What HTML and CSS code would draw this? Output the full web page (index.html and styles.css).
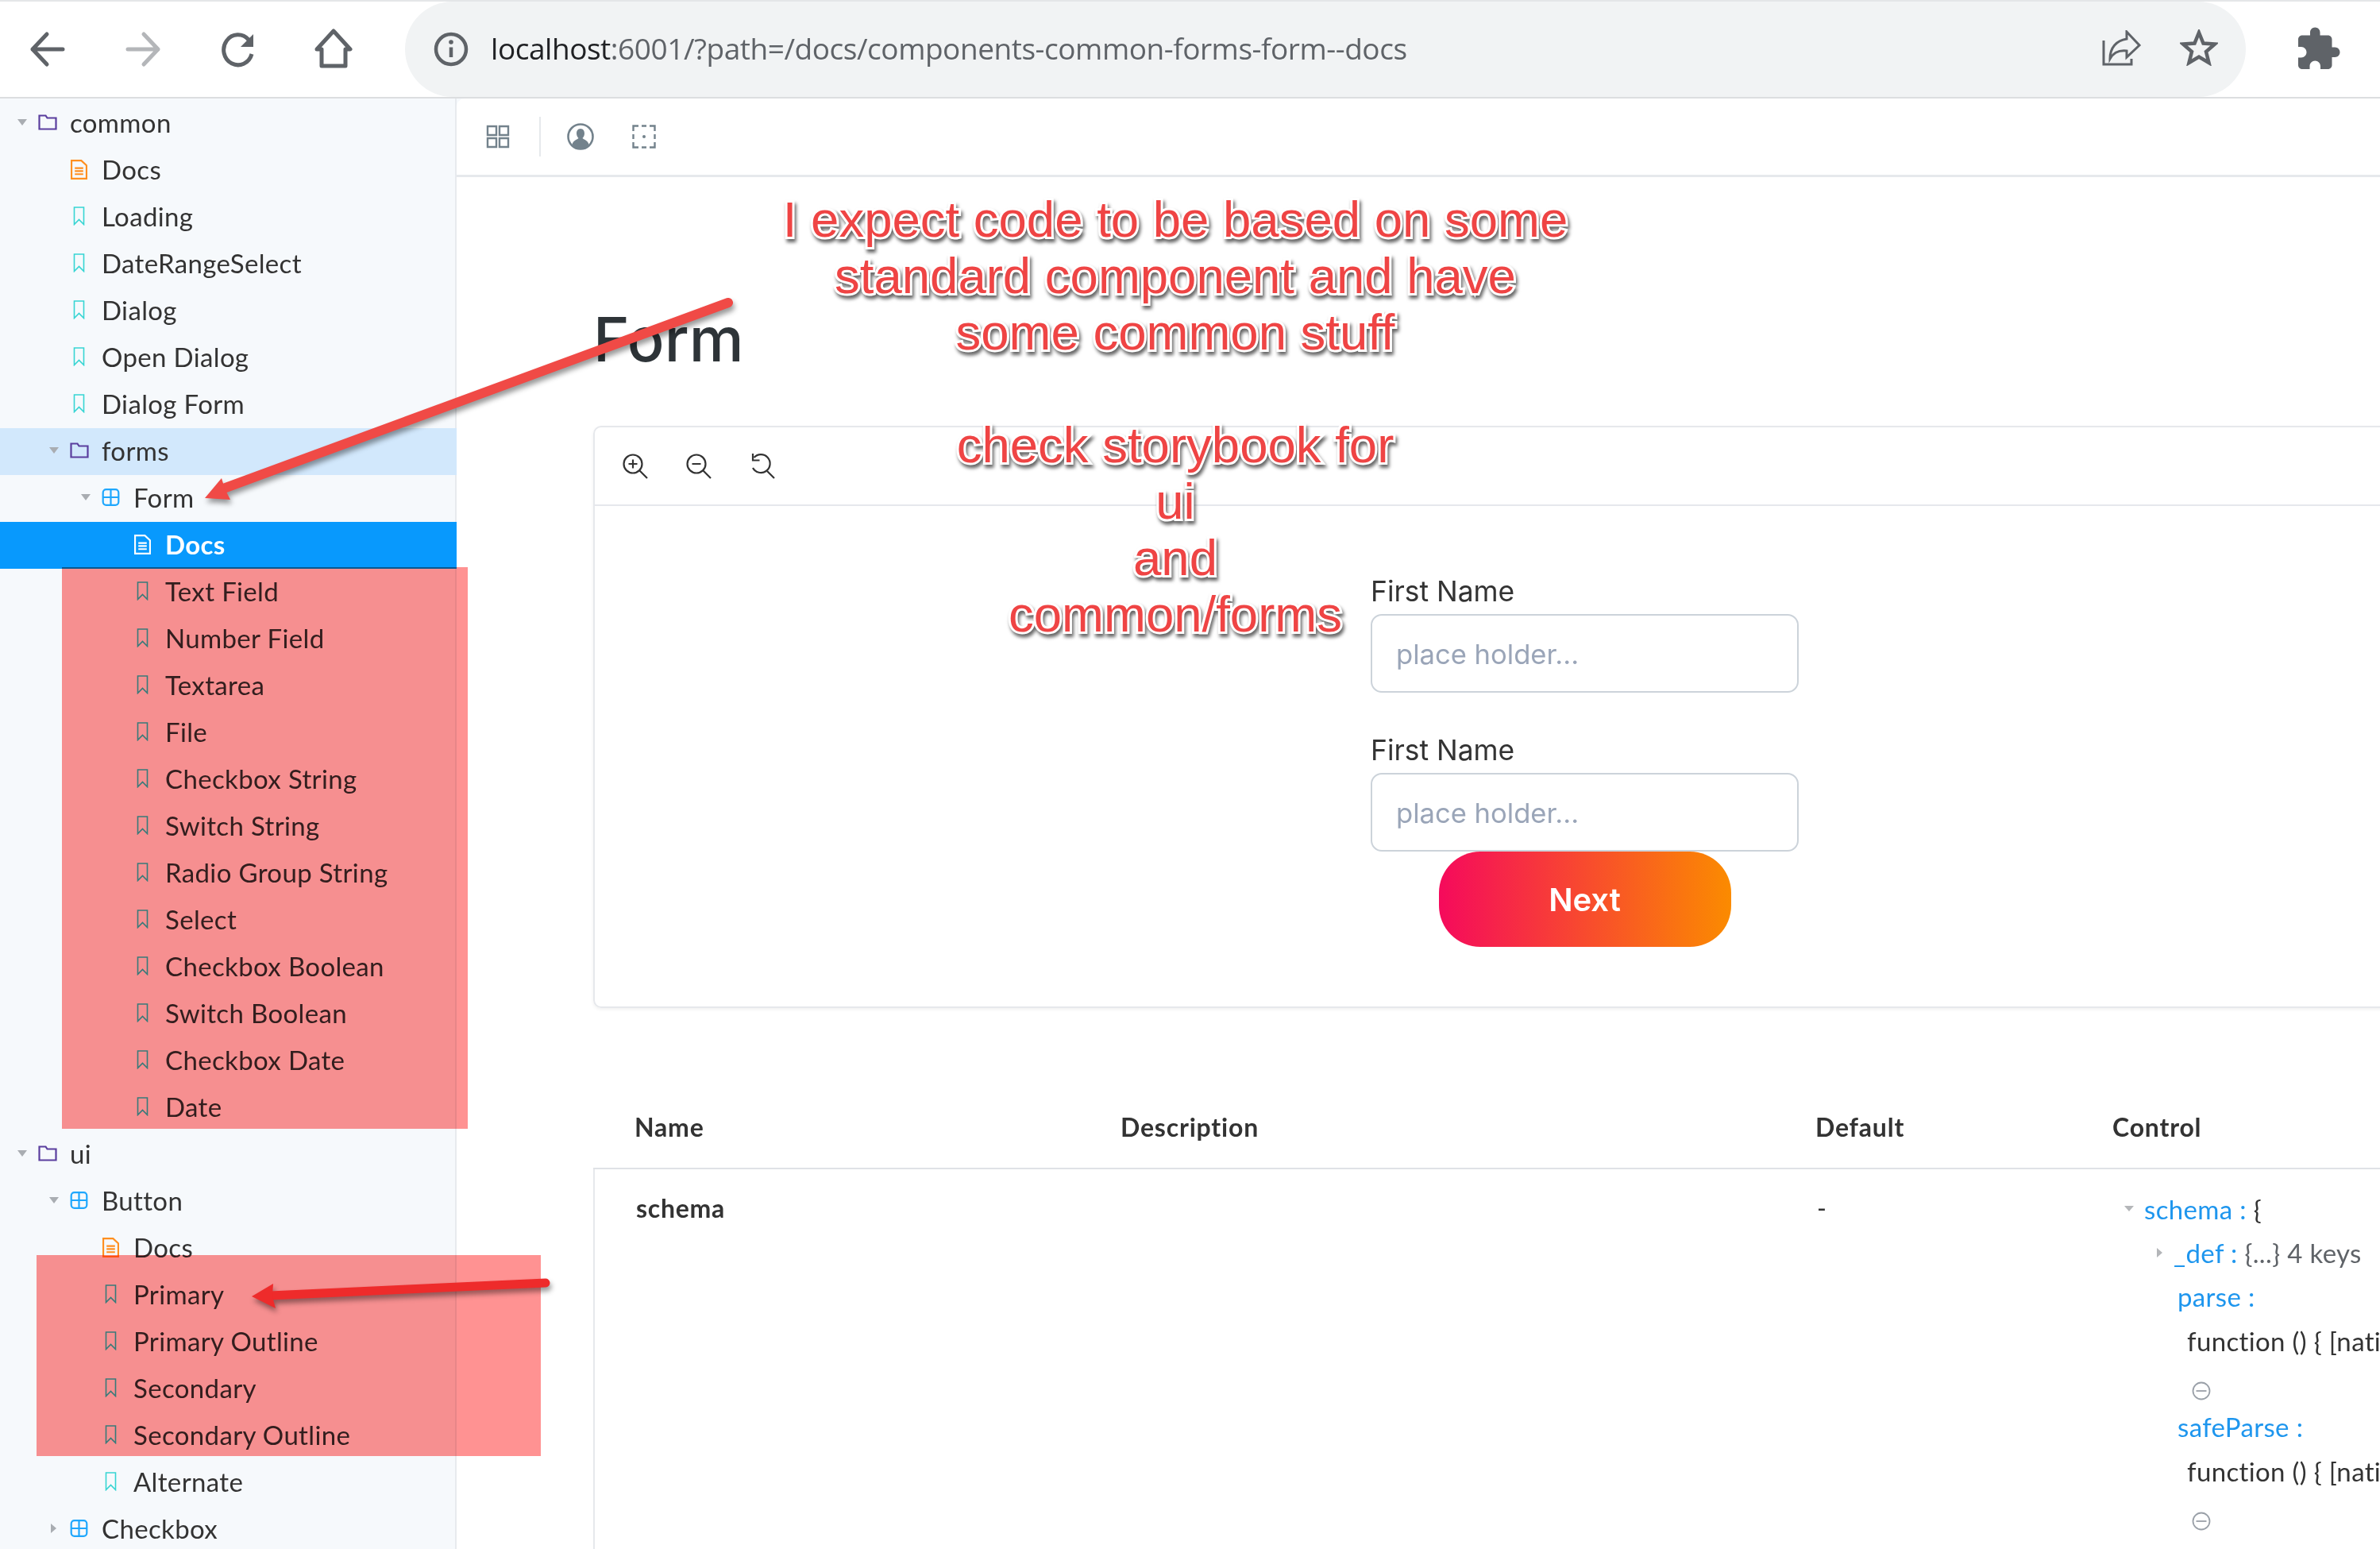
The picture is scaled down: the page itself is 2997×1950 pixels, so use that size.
FILE: index.html
```html
<!DOCTYPE html>
<html lang="en">
<head>
  <meta charset="UTF-8" />
  <meta name="viewport" content="width=device-width, initial-scale=1.0" />
  <title>Form - Docs</title>
  <link rel="stylesheet" href="styles.css">
</head>
<body>
  <svg class="defs" width="0" height="0">
    <symbol id="folder" viewBox="0 0 24 20"><path d="M1.500 18.500V1.500H9.500L11.500 4.500H22.500V18.500Z" fill="none" stroke="currentColor" stroke-width="2.200"/></symbol>
    <symbol id="comp" viewBox="0 0 22 22"><rect x="1.200" y="1.200" width="19.600" height="19.600" rx="4" fill="none" stroke="currentColor" stroke-width="2.200"/><path d="M11 1V21M1 11H21" stroke="currentColor" stroke-width="2.200"/></symbol>
    <symbol id="doc" viewBox="0 0 22 26"><path d="M1.200 1.200H14L20.800 7.500V24.800H1.200Z" fill="none" stroke="currentColor" stroke-width="2.200"/><path d="M5.500 11H16.500M5.500 15H16.500M5.500 19H16.500" stroke="currentColor" stroke-width="2.200"/></symbol>
    <symbol id="mark" viewBox="0 0 14 24"><path d="M1 1H13V22.500L7 16.500L1 22.500Z" fill="none" stroke="currentColor" stroke-width="1.600"/></symbol>
    <symbol id="collapse" viewBox="0 0 24 24"><circle cx="12" cy="12" r="10.500" fill="none" stroke="currentColor" stroke-width="1.800"/><path d="M5.500 12H18.500" stroke="currentColor" stroke-width="1.800"/></symbol>
  </svg>

  <header class="browser-bar">
    <button class="nav-btn"><svg width="48" height="48" viewBox="0 0 48 48"><path d="M43 24H5M23 5L5 24L23 43" fill="none" stroke="#5f6368" stroke-width="5" stroke-linecap="round" stroke-linejoin="round"/></svg></button>
    <button class="nav-btn"><svg width="48" height="48" viewBox="0 0 48 48"><path d="M5 24H43M25 5L43 24L25 43" fill="none" stroke="#b4b6b9" stroke-width="5" stroke-linecap="round" stroke-linejoin="round"/></svg></button>
    <button class="nav-btn"><svg width="48" height="48" viewBox="0 0 48 48"><path d="M37 12A18 19 0 1 0 41 30" fill="none" stroke="#5f6368" stroke-width="5"/><path d="M43 5V21H27Z" fill="#5f6368"/></svg></button>
    <button class="nav-btn"><svg width="52" height="52" viewBox="0 0 52 52"><path d="M26 3L47 26H41V47H11V26H5Z" fill="none" stroke="#5f6368" stroke-width="5" stroke-linejoin="round"/></svg></button>
    <div class="address">
      <svg width="44" height="44" viewBox="0 0 44 44"><circle cx="22" cy="22" r="19" fill="none" stroke="#5f6368" stroke-width="4.500"/><path d="M22 19.500V32" stroke="#5f6368" stroke-width="4.500"/><circle cx="22" cy="13" r="2.800" fill="#5f6368"/></svg>
      <span class="url"><b>localhost</b>:6001/?path=/docs/components-common-forms-form--docs</span>
      <svg class="share" width="50" height="46" viewBox="0 0 50 46"><path d="M2 13V43H37V36" fill="none" stroke="#5f6368" stroke-width="3"/><path d="M31 2L47 19L31 34V26C22 25 15 27 10 36C10 22 18 13 31 11Z" fill="none" stroke="#5f6368" stroke-width="3"/></svg>
      <svg class="star" width="48" height="46" viewBox="0 0 48 46"><path d="M24 4L29.500 17.500L44 18.500L33 28L36.500 42L24 34.500L11.500 42L15 28L4 18.500L18.500 17.500Z" fill="none" stroke="#5f6368" stroke-width="4.500"/></svg>
    </div>
    <svg class="puzzle" width="60" height="60" viewBox="0 0 24 24"><path fill="#5f6368" d="M20.500 11H19V7c0-1.100-.9-2-2-2h-4V3.500C13 2.120 11.880 1 10.500 1S8 2.120 8 3.500V5H4c-1.100 0-1.990.9-1.990 2v3.800H3.500c1.490 0 2.700 1.210 2.700 2.700s-1.210 2.700-2.700 2.700H2V20c0 1.100.9 2 2 2h3.800v-1.500c0-1.490 1.210-2.700 2.700-2.700 1.490 0 2.700 1.210 2.700 2.700V22H17c1.100 0 2-.9 2-2v-4h1.500c1.380 0 2.500-1.120 2.500-2.500S21.880 11 20.500 11z"/></svg>
  </header>

  <div class="layout">
    <nav class="sidebar">
      <div class="row d0"><i class="caret"></i><svg class="ico folder"><use href="#folder"/></svg>common</div>
      <div class="row d1"><svg class="ico doc"><use href="#doc"/></svg>Docs</div>
      <div class="row d1"><svg class="ico mark"><use href="#mark"/></svg>Loading</div>
      <div class="row d1"><svg class="ico mark"><use href="#mark"/></svg>DateRangeSelect</div>
      <div class="row d1"><svg class="ico mark"><use href="#mark"/></svg>Dialog</div>
      <div class="row d1"><svg class="ico mark"><use href="#mark"/></svg>Open Dialog</div>
      <div class="row d1"><svg class="ico mark"><use href="#mark"/></svg>Dialog Form</div>
      <div class="row d1 branch open"><i class="caret"></i><svg class="ico folder"><use href="#folder"/></svg>forms</div>
      <div class="row d2 branch"><i class="caret"></i><svg class="ico comp"><use href="#comp"/></svg>Form</div>
      <div class="row d3 selected"><svg class="ico doc"><use href="#doc"/></svg>Docs</div>
      <div class="row d3"><svg class="ico mark"><use href="#mark"/></svg>Text Field</div>
      <div class="row d3"><svg class="ico mark"><use href="#mark"/></svg>Number Field</div>
      <div class="row d3"><svg class="ico mark"><use href="#mark"/></svg>Textarea</div>
      <div class="row d3"><svg class="ico mark"><use href="#mark"/></svg>File</div>
      <div class="row d3"><svg class="ico mark"><use href="#mark"/></svg>Checkbox String</div>
      <div class="row d3"><svg class="ico mark"><use href="#mark"/></svg>Switch String</div>
      <div class="row d3"><svg class="ico mark"><use href="#mark"/></svg>Radio Group String</div>
      <div class="row d3"><svg class="ico mark"><use href="#mark"/></svg>Select</div>
      <div class="row d3"><svg class="ico mark"><use href="#mark"/></svg>Checkbox Boolean</div>
      <div class="row d3"><svg class="ico mark"><use href="#mark"/></svg>Switch Boolean</div>
      <div class="row d3"><svg class="ico mark"><use href="#mark"/></svg>Checkbox Date</div>
      <div class="row d3"><svg class="ico mark"><use href="#mark"/></svg>Date</div>
      <div class="row d0"><i class="caret"></i><svg class="ico folder"><use href="#folder"/></svg>ui</div>
      <div class="row d1 branch"><i class="caret"></i><svg class="ico comp"><use href="#comp"/></svg>Button</div>
      <div class="row d2"><svg class="ico doc"><use href="#doc"/></svg>Docs</div>
      <div class="row d2"><svg class="ico mark"><use href="#mark"/></svg>Primary</div>
      <div class="row d2"><svg class="ico mark"><use href="#mark"/></svg>Primary Outline</div>
      <div class="row d2"><svg class="ico mark"><use href="#mark"/></svg>Secondary</div>
      <div class="row d2"><svg class="ico mark"><use href="#mark"/></svg>Secondary Outline</div>
      <div class="row d2"><svg class="ico mark"><use href="#mark"/></svg>Alternate</div>
      <div class="row d1 branch closed"><i class="caret"></i><svg class="ico comp"><use href="#comp"/></svg>Checkbox</div>
    </nav>

    <main class="main">
      <div class="sb-toolbar">
        <svg width="30" height="30" viewBox="0 0 30 30"><path d="M2 2H13V13H2ZM17 2H28V13H17ZM2 17H13V28H2ZM17 17H28V28H17Z" fill="none" stroke="#73828c" stroke-width="2.400"/></svg>
        <span class="tb-divider"></span>
        <svg width="34" height="34" viewBox="0 0 34 34"><circle cx="17" cy="17" r="15.500" fill="none" stroke="#73828c" stroke-width="2.600"/><path d="M17 7C13.500 7 12 10 12 13C12 16 13.500 18 14.500 19C12 21 7.500 22 6.500 27C9 30.500 13 32 17 32C21 32 25 30.500 27.500 27C26.500 22 22 21 19.500 19C20.500 18 22 16 22 13C22 10 20.500 7 17 7Z" fill="#73828c"/></svg>
        <svg class="tb-outline" width="30" height="30" viewBox="0 0 30 30"><path d="M1.500 8V1.500H8M12 1.500H18M22 1.500H28.500V8M28.500 12V18M28.500 22V28.500H22M18 28.500H12M8 28.500H1.500V22M1.500 18V12" fill="none" stroke="#73828c" stroke-width="2.400"/><circle cx="15" cy="15" r="2" fill="#73828c"/></svg>
      </div>

      <div class="content">
        <h1>Form</h1>

        <section class="canvas">
          <div class="canvas-bar">
            <svg width="34" height="34" viewBox="0 0 34 34"><circle cx="14" cy="14" r="11.500" fill="none" stroke="#333" stroke-width="2.200"/><path d="M22.500 22.500L32 32M14 8.500V19.500M8.500 14H19.500" stroke="#333" stroke-width="2.200"/></svg>
            <svg width="34" height="34" viewBox="0 0 34 34"><circle cx="14" cy="14" r="11.500" fill="none" stroke="#333" stroke-width="2.200"/><path d="M22.500 22.500L32 32M8.500 14H19.500" stroke="#333" stroke-width="2.200"/></svg>
            <svg width="34" height="34" viewBox="0 0 34 34"><path d="M6.500 6A11.500 11.500 0 1 1 5 19" fill="none" stroke="#333" stroke-width="2.200"/><path d="M5 1V9.500H13.500" fill="none" stroke="#333" stroke-width="2.200"/><path d="M23 23L32 32" stroke="#333" stroke-width="2.200"/></svg>
          </div>
          <form class="demo-form">
            <label class="field-label">First Name</label>
            <input class="field-input" type="text" placeholder="place holder..." />
            <label class="field-label second">First Name</label>
            <input class="field-input" type="text" placeholder="place holder..." />
            <button class="next-btn" type="button">Next</button>
          </form>
        </section>

        <section class="args">
          <div class="args-head">
            <span>Name</span>
            <span>Description</span>
            <span>Default</span>
            <span>Control</span>
          </div>
          <div class="args-row">
            <span class="arg-name">schema</span>
            <span></span>
            <span class="arg-default">-</span>
            <div class="tree">
              <div class="tree-line"><i class="tree-caret"></i><span class="key">schema :</span>&nbsp;{</div>
              <div class="tree-line nested"><i class="tree-caret side"></i><span class="key">_def :</span>&nbsp;<span class="muted">{...} 4 keys</span></div>
              <div class="tree-line nested"><span class="key">parse :</span></div>
              <div class="tree-fn">function () { [native code] }</div>
              <div class="tree-collapse"><svg width="24" height="24"><use href="#collapse"/></svg></div>
              <div class="tree-line nested"><span class="key">safeParse :</span></div>
              <div class="tree-fn">function () { [native code] }</div>
              <div class="tree-collapse"><svg width="24" height="24"><use href="#collapse"/></svg></div>
            </div>
          </div>
        </section>
      </div>
    </main>
  </div>

  <!-- markup drawn over the screenshot -->
  <div class="highlight forms-mark"></div>
  <div class="highlight button-mark"></div>
  <p class="note">I expect code to be based on some<br>standard component and have<br>some common stuff<br><br>check storybook for<br>ui<br>and<br>common/forms</p>
  <svg class="arrows" width="2997" height="1950" viewBox="0 0 2997 1950">
    <g class="arrow-one">
      <path d="M917 381L276 617" fill="none" stroke="#f04a46" stroke-width="12" stroke-linecap="round"/>
      <path d="M258 627L279 602L283 615L290 629Z" fill="#f04a46"/>
    </g>
    <g class="arrow-two">
      <path d="M687 1615L340 1631" fill="none" stroke="#ee2b2b" stroke-width="11" stroke-linecap="round"/>
      <path d="M317 1632L344 1616L343 1632L347 1647Z" fill="#ee2b2b"/>
    </g>
  </svg>
</body>
</html>
```

FILE: styles.css
```css
* {
  box-sizing: border-box;
}
html, body {
  margin: 0;
  height: 100%;
  overflow: hidden;
}
body {
  position: relative;
  width: 2997px;
  height: 1950px;
  background: #fff;
  font-family: 'Lato', 'Open Sans', sans-serif;
  color: #333;
}
.defs {
  position: absolute;
}

/* browser chrome */
.browser-bar {
  display: flex;
  align-items: center;
  height: 124px;
  border-top: 2px solid #e4e6e8;
  border-bottom: 2px solid #dcdee0;
  background: #fff;
}
.nav-btn {
  display: flex;
  align-items: center;
  justify-content: center;
  width: 120px;
  padding: 0;
  border: none;
  background: none;
}
.address {
  display: flex;
  align-items: center;
  width: 2318px;
  height: 120px;
  margin-left: 30px;
  padding: 0 35px 0 36px;
  border-radius: 60px;
  background: #f1f3f4;
}
.url {
  flex: 1;
  margin-left: 28px;
  padding-bottom: 4px;
  font-family: 'Open Sans', sans-serif;
  font-size: 37px;
  letter-spacing: -0.46px;
  color: #5f6368;
  white-space: nowrap;
}
.url b {
  font-weight: 400;
  color: #202124;
}
.share {
  margin-top: -2px;
  margin-right: -2px;
}
.star {
  margin-left: 50px;
  margin-top: -4px;
}
.puzzle {
  margin-left: 61px;
}

.layout {
  display: flex;
  height: 1826px;
  background: #f6f9fc;
}

/* storybook sidebar */
.sidebar {
  flex: none;
  width: 575px;
  padding-top: 2px;
  border-right: 2px solid #e7eaee;
  font-size: 33px;
  letter-spacing: 0.35px;
  color: #333;
}
.row {
  display: flex;
  align-items: center;
  height: 59px;
  padding-bottom: 3px;
  white-space: nowrap;
}
.d0 { padding-left: 22px; }
.d1 { padding-left: 62px; }
.d2 { padding-left: 102px; }
.d3 { padding-left: 142px; }
.row > .ico:first-child {
  margin-left: 26px;
}
.caret {
  flex: none;
  width: 0;
  height: 0;
  margin-right: 14px;
  border-left: 6px solid transparent;
  border-right: 6px solid transparent;
  border-top: 8px solid #a9adb2;
}
.closed .caret {
  margin-left: 2px;
  margin-right: 17px;
  border: 6px solid transparent;
  border-right: none;
  border-left: 7px solid #a9adb2;
}
.ico {
  flex: none;
  margin-right: 17px;
}
.folder {
  width: 24px;
  height: 20px;
  margin-right: 16px;
  color: #5a3e9e;
}
.comp {
  width: 23px;
  height: 22px;
  color: #1ea7fd;
}
.doc {
  width: 23px;
  height: 25px;
  color: #ff8f1f;
}
.mark {
  width: 15px;
  height: 24px;
  margin-right: 21px;
  color: #37d5d3;
}
.row > .mark:first-child {
  margin-left: 30px;
}
.open {
  margin-right: -2px;
  background: #d2e8fc;
}
.selected {
  margin-right: -2px;
  background: #0899fd;
  color: #fff;
  font-weight: 700;
}
.selected .doc {
  color: #fff;
}

/* docs page */
.main {
  flex: 1;
  min-width: 0;
  overflow: hidden;
  background: #fff;
  border-top-left-radius: 10px;
}
.sb-toolbar {
  display: flex;
  align-items: center;
  height: 99px;
  padding-left: 37px;
  border-bottom: 3px solid #e6e9ec;
}
.tb-divider {
  width: 2px;
  height: 50px;
  margin: 0 33px 0 37px;
  background: #e6e9ec;
}
.tb-outline {
  margin-left: 48px;
}
.content {
  padding-left: 172px;
}
h1 {
  height: 313px;
  margin: 0;
  padding-top: 158px;
  font-family: 'Inter', sans-serif;
  font-size: 77.500px;
  font-weight: 500;
  line-height: 92px;
  color: #2e3438;
}
.canvas {
  width: 2400px;
  height: 733px;
  border: 2px solid #e6e8ec;
  border-radius: 10px;
  box-shadow: 0 2px 4px rgba(0,0,0,0.06);
}
.canvas-bar {
  display: flex;
  align-items: center;
  gap: 46px;
  height: 99px;
  padding-left: 34px;
  border-bottom: 2px solid #e6e8ec;
}
.demo-form {
  display: flex;
  flex-direction: column;
  width: 539px;
  margin-left: 977px;
  padding-top: 83px;
  font-family: 'Inter', sans-serif;
}
.field-label {
  height: 53px;
  font-size: 35.400px;
  line-height: 50px;
  color: #333;
}
.second {
  margin-top: 48px;
}
.field-input {
  height: 99px;
  padding: 0 30px;
  border: 2px solid #ccd3da;
  border-radius: 14px;
  font-family: 'Inter', sans-serif;
  font-size: 34.600px;
  outline: none;
}
.field-input::placeholder {
  color: #9aa5b8;
}
.next-btn {
  align-self: center;
  width: 368px;
  height: 120px;
  margin-top: 0;
  border: none;
  border-radius: 52px;
  background: linear-gradient(to right, #f50a5c, #fb8b00);
  color: #fff;
  font-family: 'Inter', sans-serif;
  font-size: 40px;
  font-weight: 600;
}

/* args table */
.args {
  width: 2400px;
  margin-top: 0;
  font-size: 32px;
}
.args-head,
.args-row {
  display: grid;
  grid-template-columns: 612px 875px 374px 1fr;
  padding-left: 52px;
}
.args-head {
  align-items: end;
  height: 203px;
  padding-bottom: 32px;
  border-bottom: 2px solid #dfe2e6;
  font-weight: 700;
  letter-spacing: 0.8px;
  color: #333;
}
.args-row {
  height: 500px;
  border-left: 2px solid #e6e8ec;
  padding-top: 26px;
}
.arg-name {
  font-weight: 700;
  letter-spacing: 0.7px;
  line-height: 46px;
}
.arg-default {
  line-height: 46px;
}
.tree {
  margin-left: 13px;
  margin-top: -4px;
  font-size: 33px;
  letter-spacing: 0.35px;
  white-space: nowrap;
}
.tree-line {
  display: flex;
  align-items: center;
  height: 55px;
  padding-left: 26px;
  color: #333;
}
.nested {
  padding-left: 67px;
  position: relative;
}
.key {
  color: #1e96ee;
}
.muted {
  color: #5f6368;
}
.tree-caret {
  width: 0;
  height: 0;
  margin-left: -26px;
  margin-right: 13px;
  border-left: 6px solid transparent;
  border-right: 6px solid transparent;
  border-top: 7px solid #b4b6b9;
}
.tree-caret.side {
  margin-right: 14px;
  border: 6px solid transparent;
  border-right: none;
  border-left: 7px solid #b4b6b9;
}
.tree-fn {
  height: 58px;
  padding-left: 79px;
  line-height: 58px;
}
.tree-collapse {
  height: 51px;
  padding-left: 85px;
  padding-top: 13px;
  color: #9aa0a8;
}

/* red markup */
.highlight {
  position: absolute;
  background: #ff9292;
  mix-blend-mode: multiply;
}
.forms-mark {
  left: 78px;
  top: 714px;
  width: 511px;
  height: 707px;
}
.button-mark {
  left: 46px;
  top: 1580px;
  width: 635px;
  height: 253px;
}
.note {
  position: absolute;
  left: 880px;
  top: 241px;
  width: 1200px;
  margin: 0;
  font-family: 'Liberation Sans', sans-serif;
  font-size: 63.500px;
  line-height: 71px;
  text-align: center;
  color: #ef4444;
  -webkit-text-stroke: 6px #fff;
  paint-order: stroke fill;
  filter: drop-shadow(2px 4px 2px rgba(0,0,0,0.6));
}
.arrows {
  position: absolute;
  left: 0;
  top: 0;
  pointer-events: none;
}
.arrow-one,
.arrow-two {
  filter: drop-shadow(2px 5px 3px rgba(0,0,0,0.4));
}
```
